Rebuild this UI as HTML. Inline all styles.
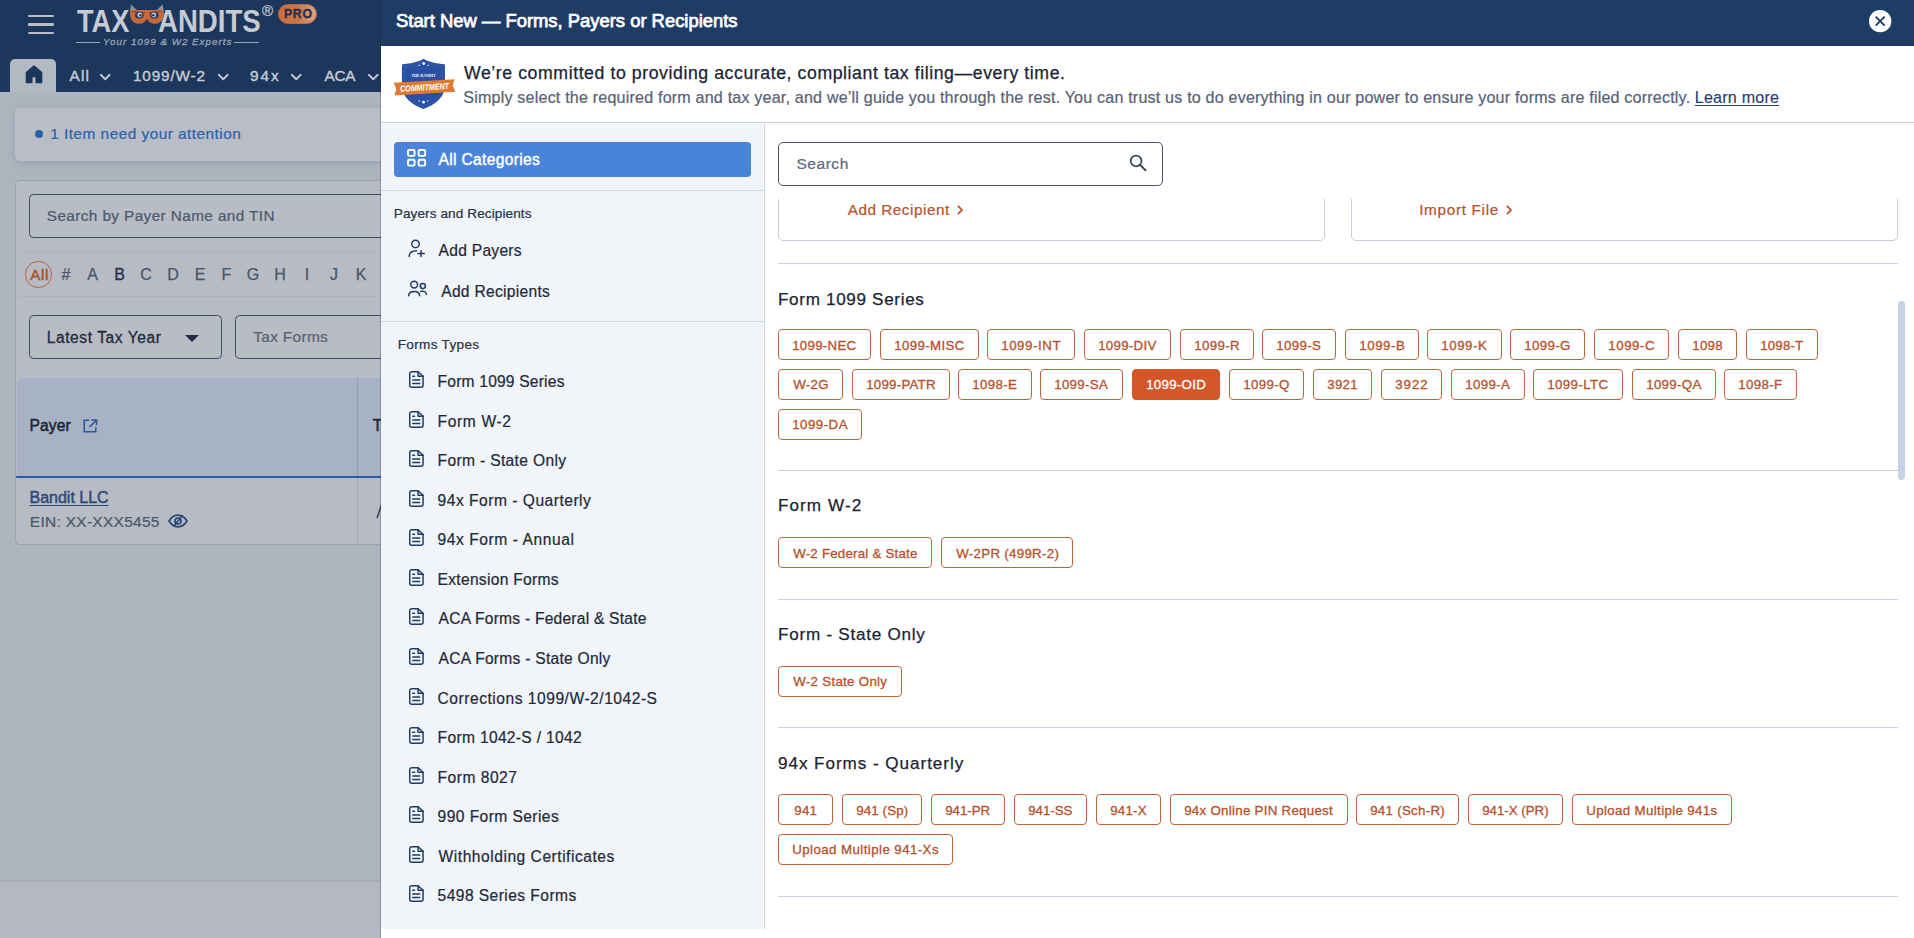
<!DOCTYPE html>
<html lang="en"><head><meta charset="utf-8"><title>TaxBandits - Start New</title>
<style>
*{box-sizing:border-box;margin:0;padding:0}
html,body{width:1914px;height:938px;overflow:hidden;background:#fff;font-family:"Liberation Sans",sans-serif}
.t{position:absolute;white-space:nowrap;font-family:"Liberation Sans",sans-serif}
.b{position:absolute}
svg{position:absolute;overflow:visible}
.chip{position:absolute;height:31px;border:1px solid #c0633c;border-radius:4px;background:#fff}
.chip.on{background:#d4572a;border-color:#d4572a}
.sep{position:absolute;height:1px;background:#c9cfdd}
i.m{display:inline-block;width:0;height:0}

</style></head>
<body>
<div class="b" style="left:0;top:0;width:381px;height:938px;background:#adb4be"></div>
<div class="b" style="left:0;top:0;width:381px;height:92px;background:#1c365c"></div>
<div class="b" style="left:28px;top:14.5px;width:26px;height:2.4px;background:#b9bec8;border-radius:1px"></div>
<div class="b" style="left:28px;top:23.3px;width:26px;height:2.4px;background:#b9bec8;border-radius:1px"></div>
<div class="b" style="left:28px;top:32px;width:26px;height:2.4px;background:#b9bec8;border-radius:1px"></div>
<span class="t" style="left:76.6px;top:5px;font-size:32px;line-height:32px;font-weight:700;color:#c6cad2;letter-spacing:0.000px;transform:scaleX(0.8492);transform-origin:0 0;">TAX</span>
<span class="t" style="left:157.838px;top:5px;font-size:32px;line-height:32px;font-weight:700;color:#c6cad2;letter-spacing:0.000px;transform:scaleX(0.8624);transform-origin:0 0;">ANDITS</span>
<svg style="left:129px;top:3px" width="36" height="22" viewBox="0 0 36 22">
<path d="M1.200 7.500 L2 1.200 L8 7.500 Z M34.800 7.500 L33.600 1.200 L27.500 7.500 Z" fill="#8c94a1"/>
<path d="M1 7 H34.800 L34.600 13 C34 17.500 30.500 20.800 26 20.800 C22 20.800 19.300 18.800 17.900 15.800 C16.500 18.800 13.800 20.800 9.800 20.800 C5.300 20.800 1.800 17.500 1.200 13 Z" fill="#c8693a"/>
<path d="M3 8.300 L16 10 M32.800 8.300 L19.800 10" stroke="#8f4a28" stroke-width="1.300"/>
<ellipse cx="10.300" cy="12.200" rx="4.300" ry="3.400" fill="#2b3b5e"/><ellipse cx="25.300" cy="12.200" rx="4.300" ry="3.400" fill="#2b3b5e"/>
<circle cx="10.800" cy="12" r="2.400" fill="#c9ced8"/><circle cx="24.800" cy="12" r="2.400" fill="#c9ced8"/>
<circle cx="11.300" cy="12.200" r="1.200" fill="#1c365c"/><circle cx="24.300" cy="12.200" r="1.200" fill="#1c365c"/>
</svg>
<span class="t" style="left:262px;top:3px;font-size:15px;line-height:15px;font-weight:400;color:#c6cad2;letter-spacing:0.000px;-webkit-text-stroke:.22px;">®</span>
<div class="b" style="left:278.300px;top:4px;width:38.700px;height:20.300px;border-radius:10.500px;background:linear-gradient(90deg,#cf6f3a 0%,#c97648 50%,#d8a585 100%);border:1px solid #b66b43"></div>
<span class="t" style="left:284px;top:8px;font-size:12.3px;line-height:12px;font-weight:700;color:#272c4f;letter-spacing:0.650px;-webkit-text-stroke:.3px;">PRO</span>
<div class="b" style="left:76px;top:41.500px;width:24px;height:1px;background:#9aa3b3"></div>
<div class="b" style="left:234px;top:41.500px;width:25px;height:1px;background:#9aa3b3"></div>
<span class="t" style="left:103px;top:37px;font-size:9.8px;line-height:10px;font-weight:400;color:#9aa3b3;letter-spacing:1.000px;font-style:italic;-webkit-text-stroke:.3px #9aa3b3;">Your 1099 &amp; W2 Experts</span>
<div class="b" style="left:10px;top:59px;width:46px;height:33px;background:#b3b9c3;border-radius:5px 5px 0 0"></div>
<svg style="left:24.700px;top:64.600px" width="18" height="19" viewBox="0 0 18 19"><path d="M9 1.200 L1.500 7.500 V17.500 H6.700 V11.500 H11.300 V17.500 H16.500 V7.500 Z" fill="#1c365c" stroke="#1b3459" stroke-width="1.6" stroke-linejoin="round"/></svg>
<span class="t" style="left:69.5px;top:68px;font-size:15.3px;line-height:15px;font-weight:500;color:#c8ccd4;letter-spacing:1.250px;-webkit-text-stroke:.4px;">All</span>
<svg style="left:100px;top:74px" width="10.5" height="6" viewBox="0 0 10.5 6"><path d="M0.800 0.800 L5.25 5.2 L9.7 0.800" fill="none" stroke="#c3c7cf" stroke-width="1.9" stroke-linecap="round" stroke-linejoin="round"/></svg>
<span class="t" style="left:133px;top:68px;font-size:15.3px;line-height:15px;font-weight:500;color:#c8ccd4;letter-spacing:0.857px;-webkit-text-stroke:.4px;">1099/W-2</span>
<svg style="left:217.5px;top:74px" width="10.5" height="6" viewBox="0 0 10.5 6"><path d="M0.800 0.800 L5.25 5.2 L9.7 0.800" fill="none" stroke="#c3c7cf" stroke-width="1.9" stroke-linecap="round" stroke-linejoin="round"/></svg>
<span class="t" style="left:250px;top:68px;font-size:15.3px;line-height:15px;font-weight:500;color:#c8ccd4;letter-spacing:2.000px;-webkit-text-stroke:.4px;">94x</span>
<svg style="left:291px;top:74px" width="10.5" height="6" viewBox="0 0 10.5 6"><path d="M0.800 0.800 L5.25 5.2 L9.7 0.800" fill="none" stroke="#c3c7cf" stroke-width="1.9" stroke-linecap="round" stroke-linejoin="round"/></svg>
<span class="t" style="left:324.5px;top:68px;font-size:15.3px;line-height:15px;font-weight:500;color:#c8ccd4;letter-spacing:-0.250px;-webkit-text-stroke:.4px;">ACA</span>
<svg style="left:368px;top:74px" width="10.5" height="6" viewBox="0 0 10.5 6"><path d="M0.800 0.800 L5.25 5.2 L9.7 0.800" fill="none" stroke="#c3c7cf" stroke-width="1.9" stroke-linecap="round" stroke-linejoin="round"/></svg>
<div class="b" style="left:15px;top:108px;width:380px;height:53px;background:#b8bdc6;border-radius:5px;box-shadow:0 2px 6px rgba(120,130,150,.35)"></div>
<div class="b" style="left:35.400px;top:130.300px;width:8px;height:8px;border-radius:50%;background:#2d5fa8"></div>
<span class="t" style="left:50.3px;top:126px;font-size:15.4px;line-height:15px;font-weight:400;color:#2f62ad;letter-spacing:0.468px;-webkit-text-stroke:.22px;">1 Item need your attention</span>
<div class="b" style="left:15px;top:180px;width:400px;height:365px;background:#b6bbc4;border:1px solid #98a3b4;border-radius:5px"></div>
<div class="b" style="left:29px;top:194px;width:400px;height:44px;border:1.200px solid #3a4c65;border-radius:4.500px;background:#b8bcc5"></div>
<span class="t" style="left:46.8px;top:208px;font-size:15.3px;line-height:15px;font-weight:400;color:#4b596d;letter-spacing:0.415px;-webkit-text-stroke:.22px;">Search by Payer Name and TIN</span>
<div class="b" style="left:18px;top:251px;width:380px;height:1px;background:#aeb4bd"></div>
<div class="b" style="left:18px;top:296px;width:380px;height:1px;background:#aeb4bd"></div>
<div class="b" style="left:25px;top:261px;width:26.500px;height:26.500px;border-radius:50%;border:1px solid #b5623d"></div>
<span class="t" style="left:30.3px;top:267px;font-size:15.2px;line-height:15px;font-weight:500;color:#a8502c;letter-spacing:0.550px;-webkit-text-stroke:.45px;">All</span>
<span class="t" style="left:56px;width:20px;text-align:center;top:267px;font-size:16px;line-height:16px;color:#4a5567;-webkit-text-stroke:.25px;">#</span>
<span class="t" style="left:82.5px;width:20px;text-align:center;top:267px;font-size:16px;line-height:16px;color:#4a5567;-webkit-text-stroke:.25px;">A</span>
<span class="t" style="left:109.5px;width:20px;text-align:center;top:267px;font-size:16px;line-height:16px;color:#26344b;-webkit-text-stroke:.25px;-webkit-text-stroke:.32px;">B</span>
<span class="t" style="left:136px;width:20px;text-align:center;top:267px;font-size:16px;line-height:16px;color:#4a5567;-webkit-text-stroke:.25px;">C</span>
<span class="t" style="left:163px;width:20px;text-align:center;top:267px;font-size:16px;line-height:16px;color:#4a5567;-webkit-text-stroke:.25px;">D</span>
<span class="t" style="left:190px;width:20px;text-align:center;top:267px;font-size:16px;line-height:16px;color:#4a5567;-webkit-text-stroke:.25px;">E</span>
<span class="t" style="left:216.5px;width:20px;text-align:center;top:267px;font-size:16px;line-height:16px;color:#4a5567;-webkit-text-stroke:.25px;">F</span>
<span class="t" style="left:243px;width:20px;text-align:center;top:267px;font-size:16px;line-height:16px;color:#4a5567;-webkit-text-stroke:.25px;">G</span>
<span class="t" style="left:270px;width:20px;text-align:center;top:267px;font-size:16px;line-height:16px;color:#4a5567;-webkit-text-stroke:.25px;">H</span>
<span class="t" style="left:297px;width:20px;text-align:center;top:267px;font-size:16px;line-height:16px;color:#4a5567;-webkit-text-stroke:.25px;">I</span>
<span class="t" style="left:324px;width:20px;text-align:center;top:267px;font-size:16px;line-height:16px;color:#4a5567;-webkit-text-stroke:.25px;">J</span>
<span class="t" style="left:351px;width:20px;text-align:center;top:267px;font-size:16px;line-height:16px;color:#4a5567;-webkit-text-stroke:.25px;">K</span>
<div class="b" style="left:29px;top:315px;width:192.500px;height:43.500px;border:1.200px solid #3a4c65;border-radius:4.500px;background:#b8bcc5"></div>
<span class="t" style="left:46.8px;top:330px;font-size:15.6px;line-height:16px;font-weight:500;color:#1f2a3c;letter-spacing:0.550px;-webkit-text-stroke:.3px;">Latest Tax Year</span>
<svg style="left:185px;top:334.500px" width="14" height="7" viewBox="0 0 14 7"><path d="M0 0 H14 L7 7 Z" fill="#1f2a3c"/></svg>
<div class="b" style="left:234.500px;top:315px;width:200px;height:43.500px;border:1.200px solid #3a4c65;border-radius:4.500px;background:#b8bcc5"></div>
<span class="t" style="left:253.3px;top:329px;font-size:15.5px;line-height:16px;font-weight:400;color:#566274;letter-spacing:0.275px;-webkit-text-stroke:.22px;">Tax Forms</span>
<div class="b" style="left:17px;top:378px;width:380px;height:99px;background:#a7b3c4;border-radius:6px 0 0 0"></div>
<div class="b" style="left:16px;top:476px;width:380px;height:2px;background:#2c5ca5"></div>
<div class="b" style="left:357px;top:378px;width:1.400px;height:98px;background:#8f9bae"></div>
<div class="b" style="left:357px;top:478px;width:1.400px;height:66px;background:#a6adba"></div>
<span class="t" style="left:29.5px;top:418px;font-size:15.6px;line-height:16px;font-weight:500;color:#1c2536;letter-spacing:0.125px;-webkit-text-stroke:.5px;">Payer</span>
<svg style="left:82.500px;top:419px" width="14.500" height="14" viewBox="0 0 14.500 14"><path d="M6 1.300 H1.200 V12.800 H12.800 V8.200" fill="none" stroke="#2e5796" stroke-width="1.6"/><path d="M8.500 1 H13.500 V6 M13.300 1.200 L6.500 8" fill="none" stroke="#2e5796" stroke-width="1.6"/></svg>
<span class="t" style="left:372.8px;top:418px;font-size:15.6px;line-height:16px;font-weight:500;color:#1c2536;letter-spacing:0.000px;-webkit-text-stroke:.5px;">T</span>
<span class="t" style="left:29.5px;top:490px;font-size:16px;line-height:16px;font-weight:500;color:#2a487a;letter-spacing:0.000px;text-decoration:underline;text-underline-offset:2px;-webkit-text-stroke:.4px;">Bandit LLC</span>
<span class="t" style="left:29.8px;top:514px;font-size:15.5px;line-height:16px;font-weight:400;color:#4b5869;letter-spacing:0.279px;-webkit-text-stroke:.22px;">EIN: XX-XXX5455</span>
<svg style="left:168px;top:513.500px" width="20" height="14" viewBox="0 0 20 14"><path d="M1 7 C4 2.200 7 1.200 10 1.200 C13 1.200 16 2.200 19 7 C16 11.800 13 12.800 10 12.800 C7 12.800 4 11.800 1 7 Z" fill="none" stroke="#274574" stroke-width="1.7"/><circle cx="10" cy="7" r="3" fill="none" stroke="#274574" stroke-width="1.6"/><path d="M5.500 12.500 L14.500 1.500" stroke="#274574" stroke-width="1.6"/></svg>
<svg style="left:376px;top:505px" width="6" height="13" viewBox="0 0 6 13"><path d="M1 13 L5.500 0" stroke="#3a4556" stroke-width="1.6"/></svg>
<div class="b" style="left:0;top:877px;width:381px;height:5px;background:linear-gradient(180deg,#b0b7c1 0%,#b0b7c1 45%,#a5acb8 55%,#a5acb8 100%)"></div><div class="b" style="left:0;top:882px;width:381px;height:56px;background:#b4b8c2"></div>
<div class="b" style="left:381px;top:0;width:1533px;height:938px;background:#fff"></div>
<div class="b" style="left:380px;top:0;width:1px;height:938px;background:rgba(20,30,50,.25)"></div><div class="b" style="left:381px;top:0;width:1533px;height:46px;background:#1e3c66;border-bottom:1px solid #193359"></div>
<span class="t" style="left:396px;top:12px;font-size:18.4px;line-height:18px;font-weight:400;color:#ffffff;letter-spacing:0.005px;-webkit-text-stroke:.75px;">Start New — Forms, Payers or Recipients</span>
<svg style="left:1868.600px;top:10px" width="22.300" height="22.300" viewBox="0 0 22 22"><circle cx="11" cy="11" r="11" fill="#fff"/><path d="M6.600 6.600 L15.400 15.400 M15.400 6.600 L6.600 15.400" stroke="#1e3c66" stroke-width="1.9" stroke-linecap="butt"/></svg>
<div class="b" style="left:381px;top:122px;width:1533px;height:1px;background:#c9cedb"></div>
<svg style="left:393px;top:58px" width="64" height="52" viewBox="0 0 64 52">
<path d="M30.500 .8 C25 4.200 17 5.800 9.200 6.200 C8.800 8 8.800 26 9.300 30 C10.300 40 19.500 47 30.500 51 C41.500 47 50.700 40 51.700 30 C52.200 26 52.200 8 51.800 6.200 C44 5.800 36 4.200 30.500 .8 Z" fill="#2c52a6"/>
<path d="M30.500 3.800 C25 6.800 18.500 8.300 11.800 8.700 V29 C12.800 38 20.500 44.500 30.500 48 C40.500 44.500 48.200 38 49.200 29 V8.700 C42.500 8.300 36 6.800 30.500 3.800 Z" fill="#2a4fa3" stroke="#3b63b9" stroke-width=".5"/>
<circle cx="30.700" cy="5.600" r="1.400" fill="#fff"/><circle cx="26.300" cy="7.400" r=".7" fill="#fff"/><circle cx="35.100" cy="7.400" r=".7" fill="#fff"/>
<circle cx="30.500" cy="44.200" r="1.400" fill="#fff"/><circle cx="26.300" cy="43" r=".7" fill="#fff"/><circle cx="34.700" cy="43" r=".7" fill="#fff"/>
<text x="30.500" y="19" font-family="Liberation Serif, serif" font-weight="700" font-size="4.600" fill="#fff" text-anchor="middle" textLength="24" lengthAdjust="spacingAndGlyphs">THE BANDIT</text>
<g transform="rotate(-3.400 31.500 29.300)">
<path d="M1 23 L62 23 L59.800 29.300 L62 35.600 L1 35.600 L3.200 29.300 Z" fill="#e07a32"/>
<text x="31.500" y="32.400" font-family="Liberation Sans, sans-serif" font-weight="700" font-style="italic" font-size="8.600" fill="#fff" text-anchor="middle" textLength="49" lengthAdjust="spacingAndGlyphs">COMMITMENT</text>
</g></svg>
<span class="t" style="left:464px;top:64px;font-size:17.7px;line-height:18px;font-weight:500;color:#1a2233;letter-spacing:0.571px;-webkit-text-stroke:.25px #1a2233;">We’re committed to providing accurate, compliant tax filing—every time.</span>
<span class="t" style="left:463.3px;top:89px;font-size:16.1px;line-height:16px;font-weight:400;color:#586274;letter-spacing:0.187px;-webkit-text-stroke:.22px;">Simply select the required form and tax year, and we’ll guide you through the rest. You can trust us to do everything in our power to ensure your forms are filed correctly.</span>
<span class="t" style="left:1694.8px;top:89px;font-size:16.1px;line-height:16px;font-weight:500;color:#24406e;letter-spacing:0.211px;text-decoration:underline;text-underline-offset:2px;-webkit-text-stroke:.15px #24406e;">Learn more</span>
<div class="b" style="left:381px;top:124px;width:382px;height:804.500px;background:#f1f5fa"></div><div class="b" style="left:764px;top:124px;width:1px;height:804.500px;background:#c9cfdc"></div>
<div class="b" style="left:394px;top:142px;width:357px;height:34.500px;background:#4a84d8;border-radius:4px"></div>
<svg style="left:407px;top:148.800px" width="19.200" height="17.600" viewBox="0 0 19.200 17.600"><g fill="none" stroke="#fff" stroke-width="1.900"><rect x="1" y="1" width="6.600" height="5.900" rx="1.300"/><rect x="11.600" y="1" width="6.600" height="5.900" rx="1.300"/><rect x="1" y="10.700" width="6.600" height="5.900" rx="1.300"/><rect x="11.600" y="10.700" width="6.600" height="5.900" rx="1.300"/></g></svg>
<span class="t" style="left:438.6px;top:152px;font-size:15.6px;line-height:16px;font-weight:500;color:#ffffff;letter-spacing:0.315px;-webkit-text-stroke:.4px;">All Categories</span>
<div class="sep" style="left:381px;top:190px;width:383px;background:#d0d7e3"></div>
<span class="t" style="left:393.8px;top:207px;font-size:13.6px;line-height:14px;font-weight:400;color:#273245;letter-spacing:0.085px;-webkit-text-stroke:.22px;">Payers and Recipients</span>
<svg style="left:400px;top:232px" width="40" height="70" viewBox="0 0 40 70"><g fill="none" stroke="#1f3a63" stroke-width="1.500" stroke-linecap="round"><circle cx="15.500" cy="11.900" r="3.750"/><path d="M9.200 24.400 C9.200 21 12 18.900 16.700 18.800"/><path d="M17.900 21.600 H24.300 M21.100 18.700 V24.600"/><circle cx="14.200" cy="52.600" r="3.400"/><circle cx="22.800" cy="54.100" r="2.550"/><path d="M8.700 63.700 C8.700 60.500 11 59.400 14.200 59.400 C17.400 59.400 19.600 60.500 19.600 63.700"/><path d="M20.700 59.400 C23.600 58.700 26.400 59.800 26.400 62.500"/></g></svg>
<span class="t" style="left:438.6px;top:243px;font-size:15.6px;line-height:16px;font-weight:400;color:#1f2937;letter-spacing:0.267px;-webkit-text-stroke:.22px;">Add Payers</span>
<span class="t" style="left:441.2px;top:284px;font-size:15.6px;line-height:16px;font-weight:400;color:#1f2937;letter-spacing:0.292px;-webkit-text-stroke:.22px;">Add Recipients</span>
<div class="sep" style="left:381px;top:321px;width:383px;background:#d0d7e3"></div>
<span class="t" style="left:397.7px;top:338px;font-size:13.6px;line-height:14px;font-weight:400;color:#273245;letter-spacing:0.310px;-webkit-text-stroke:.22px;">Forms Types</span>
<span class="t" style="left:437.6px;top:374px;font-size:15.6px;line-height:16px;font-weight:400;color:#1f2937;letter-spacing:0.193px;-webkit-text-stroke:.22px;">Form 1099 Series</span>
<svg style="left:409.200px;top:371.07px" width="14.800" height="16.900" viewBox="0 0 14.200 16.800" preserveAspectRatio="none"><g fill="none" stroke="#1f3a63" stroke-width="1.400" stroke-linejoin="round" stroke-linecap="round"><path d="M8.700 .7 H2.700 C1.600 .7 .7 1.600 .7 2.700 V14.100 C.7 15.200 1.600 16.100 2.700 16.100 H11.500 C12.600 16.100 13.500 15.200 13.500 14.100 V5.200 Z"/><path d="M8.700 .7 V5.200 H13.500"/><path d="M3.600 5.300 H5.300 M3.600 9 H10.300 M3.600 12.400 H10.300"/></g></svg>
<span class="t" style="left:437.6px;top:414px;font-size:15.6px;line-height:16px;font-weight:400;color:#1f2937;letter-spacing:0.629px;-webkit-text-stroke:.22px;">Form W-2</span>
<svg style="left:409.200px;top:411.07px" width="14.800" height="16.900" viewBox="0 0 14.200 16.800" preserveAspectRatio="none"><g fill="none" stroke="#1f3a63" stroke-width="1.400" stroke-linejoin="round" stroke-linecap="round"><path d="M8.700 .7 H2.700 C1.600 .7 .7 1.600 .7 2.700 V14.100 C.7 15.200 1.600 16.100 2.700 16.100 H11.500 C12.600 16.100 13.500 15.200 13.500 14.100 V5.200 Z"/><path d="M8.700 .7 V5.200 H13.500"/><path d="M3.600 5.300 H5.300 M3.600 9 H10.300 M3.600 12.400 H10.300"/></g></svg>
<span class="t" style="left:437.6px;top:453px;font-size:15.6px;line-height:16px;font-weight:400;color:#1f2937;letter-spacing:0.337px;-webkit-text-stroke:.22px;">Form - State Only</span>
<svg style="left:409.200px;top:450.07px" width="14.800" height="16.900" viewBox="0 0 14.200 16.800" preserveAspectRatio="none"><g fill="none" stroke="#1f3a63" stroke-width="1.400" stroke-linejoin="round" stroke-linecap="round"><path d="M8.700 .7 H2.700 C1.600 .7 .7 1.600 .7 2.700 V14.100 C.7 15.200 1.600 16.100 2.700 16.100 H11.500 C12.600 16.100 13.500 15.200 13.500 14.100 V5.200 Z"/><path d="M8.700 .7 V5.200 H13.500"/><path d="M3.600 5.300 H5.300 M3.600 9 H10.300 M3.600 12.400 H10.300"/></g></svg>
<span class="t" style="left:437.6px;top:493px;font-size:15.6px;line-height:16px;font-weight:400;color:#1f2937;letter-spacing:0.495px;-webkit-text-stroke:.22px;">94x Form - Quarterly</span>
<svg style="left:409.200px;top:490.07px" width="14.800" height="16.900" viewBox="0 0 14.200 16.800" preserveAspectRatio="none"><g fill="none" stroke="#1f3a63" stroke-width="1.400" stroke-linejoin="round" stroke-linecap="round"><path d="M8.700 .7 H2.700 C1.600 .7 .7 1.600 .7 2.700 V14.100 C.7 15.200 1.600 16.100 2.700 16.100 H11.500 C12.600 16.100 13.500 15.200 13.500 14.100 V5.200 Z"/><path d="M8.700 .7 V5.200 H13.500"/><path d="M3.600 5.300 H5.300 M3.600 9 H10.300 M3.600 12.400 H10.300"/></g></svg>
<span class="t" style="left:437.6px;top:532px;font-size:15.6px;line-height:16px;font-weight:400;color:#1f2937;letter-spacing:0.556px;-webkit-text-stroke:.22px;">94x Form - Annual</span>
<svg style="left:409.200px;top:529.07px" width="14.800" height="16.900" viewBox="0 0 14.200 16.800" preserveAspectRatio="none"><g fill="none" stroke="#1f3a63" stroke-width="1.400" stroke-linejoin="round" stroke-linecap="round"><path d="M8.700 .7 H2.700 C1.600 .7 .7 1.600 .7 2.700 V14.100 C.7 15.200 1.600 16.100 2.700 16.100 H11.500 C12.600 16.100 13.500 15.200 13.500 14.100 V5.200 Z"/><path d="M8.700 .7 V5.200 H13.500"/><path d="M3.600 5.300 H5.300 M3.600 9 H10.300 M3.600 12.400 H10.300"/></g></svg>
<span class="t" style="left:437.6px;top:572px;font-size:15.6px;line-height:16px;font-weight:400;color:#1f2937;letter-spacing:0.279px;-webkit-text-stroke:.22px;">Extension Forms</span>
<svg style="left:409.200px;top:569.07px" width="14.800" height="16.900" viewBox="0 0 14.200 16.800" preserveAspectRatio="none"><g fill="none" stroke="#1f3a63" stroke-width="1.400" stroke-linejoin="round" stroke-linecap="round"><path d="M8.700 .7 H2.700 C1.600 .7 .7 1.600 .7 2.700 V14.100 C.7 15.200 1.600 16.100 2.700 16.100 H11.500 C12.600 16.100 13.500 15.200 13.500 14.100 V5.200 Z"/><path d="M8.700 .7 V5.200 H13.500"/><path d="M3.600 5.300 H5.300 M3.600 9 H10.300 M3.600 12.400 H10.300"/></g></svg>
<span class="t" style="left:438.6px;top:611px;font-size:15.6px;line-height:16px;font-weight:400;color:#1f2937;letter-spacing:0.227px;-webkit-text-stroke:.22px;">ACA Forms - Federal &amp; State</span>
<svg style="left:409.200px;top:608.07px" width="14.800" height="16.900" viewBox="0 0 14.200 16.800" preserveAspectRatio="none"><g fill="none" stroke="#1f3a63" stroke-width="1.400" stroke-linejoin="round" stroke-linecap="round"><path d="M8.700 .7 H2.700 C1.600 .7 .7 1.600 .7 2.700 V14.100 C.7 15.200 1.600 16.100 2.700 16.100 H11.500 C12.600 16.100 13.500 15.200 13.500 14.100 V5.200 Z"/><path d="M8.700 .7 V5.200 H13.500"/><path d="M3.600 5.300 H5.300 M3.600 9 H10.300 M3.600 12.400 H10.300"/></g></svg>
<span class="t" style="left:438.6px;top:651px;font-size:15.6px;line-height:16px;font-weight:400;color:#1f2937;letter-spacing:0.257px;-webkit-text-stroke:.22px;">ACA Forms - State Only</span>
<svg style="left:409.200px;top:648.07px" width="14.800" height="16.900" viewBox="0 0 14.200 16.800" preserveAspectRatio="none"><g fill="none" stroke="#1f3a63" stroke-width="1.400" stroke-linejoin="round" stroke-linecap="round"><path d="M8.700 .7 H2.700 C1.600 .7 .7 1.600 .7 2.700 V14.100 C.7 15.200 1.600 16.100 2.700 16.100 H11.500 C12.600 16.100 13.500 15.200 13.500 14.100 V5.200 Z"/><path d="M8.700 .7 V5.200 H13.500"/><path d="M3.600 5.300 H5.300 M3.600 9 H10.300 M3.600 12.400 H10.300"/></g></svg>
<span class="t" style="left:437.6px;top:691px;font-size:15.6px;line-height:16px;font-weight:400;color:#1f2937;letter-spacing:0.515px;-webkit-text-stroke:.22px;">Corrections 1099/W-2/1042-S</span>
<svg style="left:409.200px;top:688.07px" width="14.800" height="16.900" viewBox="0 0 14.200 16.800" preserveAspectRatio="none"><g fill="none" stroke="#1f3a63" stroke-width="1.400" stroke-linejoin="round" stroke-linecap="round"><path d="M8.700 .7 H2.700 C1.600 .7 .7 1.600 .7 2.700 V14.100 C.7 15.200 1.600 16.100 2.700 16.100 H11.500 C12.600 16.100 13.500 15.200 13.500 14.100 V5.200 Z"/><path d="M8.700 .7 V5.200 H13.500"/><path d="M3.600 5.300 H5.300 M3.600 9 H10.300 M3.600 12.400 H10.300"/></g></svg>
<span class="t" style="left:437.6px;top:730px;font-size:15.6px;line-height:16px;font-weight:400;color:#1f2937;letter-spacing:0.318px;-webkit-text-stroke:.22px;">Form 1042-S / 1042</span>
<svg style="left:409.200px;top:727.07px" width="14.800" height="16.900" viewBox="0 0 14.200 16.800" preserveAspectRatio="none"><g fill="none" stroke="#1f3a63" stroke-width="1.400" stroke-linejoin="round" stroke-linecap="round"><path d="M8.700 .7 H2.700 C1.600 .7 .7 1.600 .7 2.700 V14.100 C.7 15.200 1.600 16.100 2.700 16.100 H11.500 C12.600 16.100 13.500 15.200 13.500 14.100 V5.200 Z"/><path d="M8.700 .7 V5.200 H13.500"/><path d="M3.600 5.300 H5.300 M3.600 9 H10.300 M3.600 12.400 H10.300"/></g></svg>
<span class="t" style="left:437.6px;top:770px;font-size:15.6px;line-height:16px;font-weight:400;color:#1f2937;letter-spacing:0.487px;-webkit-text-stroke:.22px;">Form 8027</span>
<svg style="left:409.200px;top:767.07px" width="14.800" height="16.900" viewBox="0 0 14.200 16.800" preserveAspectRatio="none"><g fill="none" stroke="#1f3a63" stroke-width="1.400" stroke-linejoin="round" stroke-linecap="round"><path d="M8.700 .7 H2.700 C1.600 .7 .7 1.600 .7 2.700 V14.100 C.7 15.200 1.600 16.100 2.700 16.100 H11.500 C12.600 16.100 13.500 15.200 13.500 14.100 V5.200 Z"/><path d="M8.700 .7 V5.200 H13.500"/><path d="M3.600 5.300 H5.300 M3.600 9 H10.300 M3.600 12.400 H10.300"/></g></svg>
<span class="t" style="left:437.6px;top:809px;font-size:15.6px;line-height:16px;font-weight:400;color:#1f2937;letter-spacing:0.421px;-webkit-text-stroke:.22px;">990 Form Series</span>
<svg style="left:409.200px;top:806.07px" width="14.800" height="16.900" viewBox="0 0 14.200 16.800" preserveAspectRatio="none"><g fill="none" stroke="#1f3a63" stroke-width="1.400" stroke-linejoin="round" stroke-linecap="round"><path d="M8.700 .7 H2.700 C1.600 .7 .7 1.600 .7 2.700 V14.100 C.7 15.200 1.600 16.100 2.700 16.100 H11.500 C12.600 16.100 13.500 15.200 13.500 14.100 V5.200 Z"/><path d="M8.700 .7 V5.200 H13.500"/><path d="M3.600 5.300 H5.300 M3.600 9 H10.300 M3.600 12.400 H10.300"/></g></svg>
<span class="t" style="left:438.6px;top:849px;font-size:15.6px;line-height:16px;font-weight:400;color:#1f2937;letter-spacing:0.517px;-webkit-text-stroke:.22px;">Withholding Certificates</span>
<svg style="left:409.200px;top:846.07px" width="14.800" height="16.900" viewBox="0 0 14.200 16.800" preserveAspectRatio="none"><g fill="none" stroke="#1f3a63" stroke-width="1.400" stroke-linejoin="round" stroke-linecap="round"><path d="M8.700 .7 H2.700 C1.600 .7 .7 1.600 .7 2.700 V14.100 C.7 15.200 1.600 16.100 2.700 16.100 H11.500 C12.600 16.100 13.500 15.200 13.500 14.100 V5.200 Z"/><path d="M8.700 .7 V5.200 H13.500"/><path d="M3.600 5.300 H5.300 M3.600 9 H10.300 M3.600 12.400 H10.300"/></g></svg>
<span class="t" style="left:437.6px;top:888px;font-size:15.6px;line-height:16px;font-weight:400;color:#1f2937;letter-spacing:0.431px;-webkit-text-stroke:.22px;">5498 Series Forms</span>
<svg style="left:409.200px;top:885.07px" width="14.800" height="16.900" viewBox="0 0 14.200 16.800" preserveAspectRatio="none"><g fill="none" stroke="#1f3a63" stroke-width="1.400" stroke-linejoin="round" stroke-linecap="round"><path d="M8.700 .7 H2.700 C1.600 .7 .7 1.600 .7 2.700 V14.100 C.7 15.200 1.600 16.100 2.700 16.100 H11.500 C12.600 16.100 13.500 15.200 13.500 14.100 V5.200 Z"/><path d="M8.700 .7 V5.200 H13.500"/><path d="M3.600 5.300 H5.300 M3.600 9 H10.300 M3.600 12.400 H10.300"/></g></svg>
<div class="b" style="left:778px;top:142px;width:385px;height:44px;border:1.200px solid #46556a;border-radius:5px;background:#fff"></div>
<span class="t" style="left:796.4px;top:156px;font-size:15.5px;line-height:16px;font-weight:400;color:#5b6880;letter-spacing:0.560px;-webkit-text-stroke:.22px;">Search</span>
<svg style="left:1126px;top:150px" width="24" height="24" viewBox="0 0 24 24"><circle cx="10.100" cy="10.900" r="5.400" fill="none" stroke="#3b485c" stroke-width="1.750"/><path d="M14.100 14.900 L19.500 20.300" stroke="#3b485c" stroke-width="2" stroke-linecap="round"/></svg>
<div class="b" style="left:778px;top:199px;width:547px;height:42px;overflow:hidden"><div style="position:absolute;left:0;top:-30px;width:547px;height:72px;border:1px solid #c8cedc;border-radius:5px"></div></div>
<div class="b" style="left:1351px;top:199px;width:547px;height:42px;overflow:hidden"><div style="position:absolute;left:0;top:-30px;width:547px;height:72px;border:1px solid #c8cedc;border-radius:5px"></div></div>
<span class="t" style="left:847.7px;top:202px;font-size:15.3px;line-height:15px;font-weight:500;color:#b95028;letter-spacing:0.525px;-webkit-text-stroke:.2px #b5512a;">Add Recipient</span>
<svg style="left:956.500px;top:204.500px" width="6" height="10" viewBox="0 0 6 10"><path d="M.9 .9 L5 5 L.9 9.100" fill="none" stroke="#b5512a" stroke-width="1.700"/></svg>
<span class="t" style="left:1419.2px;top:202px;font-size:15.3px;line-height:15px;font-weight:500;color:#b95028;letter-spacing:0.680px;-webkit-text-stroke:.2px #b5512a;">Import File</span>
<svg style="left:1505.500px;top:204.500px" width="6" height="10" viewBox="0 0 6 10"><path d="M.9 .9 L5 5 L.9 9.100" fill="none" stroke="#b5512a" stroke-width="1.700"/></svg>
<div class="sep" style="left:778px;top:263px;width:1120px"></div>
<span class="t" style="left:778px;top:291px;font-size:17.1px;line-height:17px;font-weight:500;color:#1a2233;letter-spacing:0.667px;-webkit-text-stroke:.25px #1a2233;">Form 1099 Series</span>
<div class="chip" style="left:778px;top:329px;width:93px;height:31px"></div>
<span class="t" style="left:792.2px;top:339px;font-size:13.3px;line-height:13px;font-weight:500;color:#b5512a;letter-spacing:0.271px;-webkit-text-stroke:.3px #b5512a;">1099-NEC</span>
<div class="chip" style="left:880px;top:329px;width:99px;height:31px"></div>
<span class="t" style="left:894.2px;top:339px;font-size:13.3px;line-height:13px;font-weight:500;color:#b5512a;letter-spacing:0.362px;-webkit-text-stroke:.3px #b5512a;">1099-MISC</span>
<div class="chip" style="left:987px;top:329px;width:88px;height:31px"></div>
<span class="t" style="left:1001.2px;top:339px;font-size:13.3px;line-height:13px;font-weight:500;color:#b5512a;letter-spacing:0.557px;-webkit-text-stroke:.3px #b5512a;">1099-INT</span>
<div class="chip" style="left:1084px;top:329px;width:87px;height:31px"></div>
<span class="t" style="left:1098.2px;top:339px;font-size:13.3px;line-height:13px;font-weight:500;color:#b5512a;letter-spacing:0.271px;-webkit-text-stroke:.3px #b5512a;">1099-DIV</span>
<div class="chip" style="left:1180px;top:329px;width:74px;height:31px"></div>
<span class="t" style="left:1194.2px;top:339px;font-size:13.3px;line-height:13px;font-weight:500;color:#b5512a;letter-spacing:0.380px;-webkit-text-stroke:.3px #b5512a;">1099-R</span>
<div class="chip" style="left:1262px;top:329px;width:74px;height:31px"></div>
<span class="t" style="left:1276.2px;top:339px;font-size:13.3px;line-height:13px;font-weight:500;color:#b5512a;letter-spacing:0.380px;-webkit-text-stroke:.3px #b5512a;">1099-S</span>
<div class="chip" style="left:1345px;top:329px;width:74px;height:31px"></div>
<span class="t" style="left:1359.2px;top:339px;font-size:13.3px;line-height:13px;font-weight:500;color:#b5512a;letter-spacing:0.580px;-webkit-text-stroke:.3px #b5512a;">1099-B</span>
<div class="chip" style="left:1427px;top:329px;width:75px;height:31px"></div>
<span class="t" style="left:1441.2px;top:339px;font-size:13.3px;line-height:13px;font-weight:500;color:#b5512a;letter-spacing:0.580px;-webkit-text-stroke:.3px #b5512a;">1099-K</span>
<div class="chip" style="left:1510px;top:329px;width:75px;height:31px"></div>
<span class="t" style="left:1524.2px;top:339px;font-size:13.3px;line-height:13px;font-weight:500;color:#b5512a;letter-spacing:0.380px;-webkit-text-stroke:.3px #b5512a;">1099-G</span>
<div class="chip" style="left:1594px;top:329px;width:75px;height:31px"></div>
<span class="t" style="left:1608.2px;top:339px;font-size:13.3px;line-height:13px;font-weight:500;color:#b5512a;letter-spacing:0.580px;-webkit-text-stroke:.3px #b5512a;">1099-C</span>
<div class="chip" style="left:1678px;top:329px;width:59px;height:31px"></div>
<span class="t" style="left:1692.2px;top:339px;font-size:13.3px;line-height:13px;font-weight:500;color:#b5512a;letter-spacing:0.300px;-webkit-text-stroke:.3px #b5512a;">1098</span>
<div class="chip" style="left:1746px;top:329px;width:72px;height:31px"></div>
<span class="t" style="left:1760.2px;top:339px;font-size:13.3px;line-height:13px;font-weight:500;color:#b5512a;letter-spacing:0.180px;-webkit-text-stroke:.3px #b5512a;">1098-T</span>
<div class="chip" style="left:778px;top:369px;width:65px;height:31px"></div>
<span class="t" style="left:793.2px;top:378px;font-size:13.3px;line-height:13px;font-weight:500;color:#b5512a;letter-spacing:0.300px;-webkit-text-stroke:.3px #b5512a;">W-2G</span>
<div class="chip" style="left:852px;top:369px;width:98px;height:31px"></div>
<span class="t" style="left:866.2px;top:378px;font-size:13.3px;line-height:13px;font-weight:500;color:#b5512a;letter-spacing:0.237px;-webkit-text-stroke:.3px #b5512a;">1099-PATR</span>
<div class="chip" style="left:958px;top:369px;width:74px;height:31px"></div>
<span class="t" style="left:972.2px;top:378px;font-size:13.3px;line-height:13px;font-weight:500;color:#b5512a;letter-spacing:0.380px;-webkit-text-stroke:.3px #b5512a;">1098-E</span>
<div class="chip" style="left:1040px;top:369px;width:83px;height:31px"></div>
<span class="t" style="left:1054.2px;top:378px;font-size:13.3px;line-height:13px;font-weight:500;color:#b5512a;letter-spacing:0.317px;-webkit-text-stroke:.3px #b5512a;">1099-SA</span>
<div class="chip on" style="left:1132px;top:369px;width:88px;height:31px"></div>
<span class="t" style="left:1146.2px;top:378px;font-size:13.3px;line-height:13px;font-weight:500;color:#ffffff;letter-spacing:0.271px;-webkit-text-stroke:.3px #ffffff;">1099-OID</span>
<div class="chip" style="left:1229px;top:369px;width:75px;height:31px"></div>
<span class="t" style="left:1243.2px;top:378px;font-size:13.3px;line-height:13px;font-weight:500;color:#b5512a;letter-spacing:0.380px;-webkit-text-stroke:.3px #b5512a;">1099-Q</span>
<div class="chip" style="left:1313px;top:369px;width:59px;height:31px"></div>
<span class="t" style="left:1327.2px;top:378px;font-size:13.3px;line-height:13px;font-weight:500;color:#b5512a;letter-spacing:0.300px;-webkit-text-stroke:.3px #b5512a;">3921</span>
<div class="chip" style="left:1381px;top:369px;width:61px;height:31px"></div>
<span class="t" style="left:1395.2px;top:378px;font-size:13.3px;line-height:13px;font-weight:500;color:#b5512a;letter-spacing:0.967px;-webkit-text-stroke:.3px #b5512a;">3922</span>
<div class="chip" style="left:1451px;top:369px;width:74px;height:31px"></div>
<span class="t" style="left:1465.2px;top:378px;font-size:13.3px;line-height:13px;font-weight:500;color:#b5512a;letter-spacing:0.380px;-webkit-text-stroke:.3px #b5512a;">1099-A</span>
<div class="chip" style="left:1533px;top:369px;width:90px;height:31px"></div>
<span class="t" style="left:1547.2px;top:378px;font-size:13.3px;line-height:13px;font-weight:500;color:#b5512a;letter-spacing:0.414px;-webkit-text-stroke:.3px #b5512a;">1099-LTC</span>
<div class="chip" style="left:1632px;top:369px;width:84px;height:31px"></div>
<span class="t" style="left:1646.2px;top:378px;font-size:13.3px;line-height:13px;font-weight:500;color:#b5512a;letter-spacing:0.317px;-webkit-text-stroke:.3px #b5512a;">1099-QA</span>
<div class="chip" style="left:1724px;top:369px;width:73px;height:31px"></div>
<span class="t" style="left:1738.2px;top:378px;font-size:13.3px;line-height:13px;font-weight:500;color:#b5512a;letter-spacing:0.380px;-webkit-text-stroke:.3px #b5512a;">1098-F</span>
<div class="chip" style="left:778px;top:409px;width:84px;height:31px"></div>
<span class="t" style="left:792.2px;top:418px;font-size:13.3px;line-height:13px;font-weight:500;color:#b5512a;letter-spacing:0.483px;-webkit-text-stroke:.3px #b5512a;">1099-DA</span>
<div class="sep" style="left:778px;top:470px;width:1120px"></div>
<span class="t" style="left:778px;top:497px;font-size:17.1px;line-height:17px;font-weight:500;color:#1a2233;letter-spacing:1.071px;-webkit-text-stroke:.25px #1a2233;">Form W-2</span>
<div class="chip" style="left:778px;top:537px;width:154px;height:31px"></div>
<span class="t" style="left:793.2px;top:547px;font-size:13.3px;line-height:13px;font-weight:500;color:#b5512a;letter-spacing:0.217px;-webkit-text-stroke:.3px #b5512a;">W-2 Federal &amp; State</span>
<div class="chip" style="left:941px;top:537px;width:132px;height:31px"></div>
<span class="t" style="left:956.2px;top:547px;font-size:13.3px;line-height:13px;font-weight:500;color:#b5512a;letter-spacing:0.300px;-webkit-text-stroke:.3px #b5512a;">W-2PR (499R-2)</span>
<div class="sep" style="left:778px;top:599px;width:1120px"></div>
<span class="t" style="left:778px;top:626px;font-size:17.1px;line-height:17px;font-weight:500;color:#1a2233;letter-spacing:0.750px;-webkit-text-stroke:.25px #1a2233;">Form - State Only</span>
<div class="chip" style="left:778px;top:666px;width:124px;height:31px"></div>
<span class="t" style="left:793.2px;top:675px;font-size:13.3px;line-height:13px;font-weight:500;color:#b5512a;letter-spacing:0.300px;-webkit-text-stroke:.3px #b5512a;">W-2 State Only</span>
<div class="sep" style="left:778px;top:727px;width:1120px"></div>
<span class="t" style="left:778px;top:755px;font-size:17.1px;line-height:17px;font-weight:500;color:#1a2233;letter-spacing:0.950px;-webkit-text-stroke:.25px #1a2233;">94x Forms - Quarterly</span>
<div class="chip" style="left:778px;top:794px;width:55px;height:31px"></div>
<span class="t" style="left:794.2px;top:804px;font-size:13.3px;line-height:13px;font-weight:500;color:#b5512a;letter-spacing:0.300px;-webkit-text-stroke:.3px #b5512a;">941</span>
<div class="chip" style="left:842px;top:794px;width:80px;height:31px"></div>
<span class="t" style="left:856.2px;top:804px;font-size:13.3px;line-height:13px;font-weight:500;color:#b5512a;letter-spacing:0.129px;-webkit-text-stroke:.3px #b5512a;">941 (Sp)</span>
<div class="chip" style="left:931px;top:794px;width:74px;height:31px"></div>
<span class="t" style="left:945.2px;top:804px;font-size:13.3px;line-height:13px;font-weight:500;color:#b5512a;letter-spacing:-0.020px;-webkit-text-stroke:.3px #b5512a;">941-PR</span>
<div class="chip" style="left:1014px;top:794px;width:73px;height:31px"></div>
<span class="t" style="left:1028.2px;top:804px;font-size:13.3px;line-height:13px;font-weight:500;color:#b5512a;letter-spacing:-0.020px;-webkit-text-stroke:.3px #b5512a;">941-SS</span>
<div class="chip" style="left:1096px;top:794px;width:65px;height:31px"></div>
<span class="t" style="left:1110.2px;top:804px;font-size:13.3px;line-height:13px;font-weight:500;color:#b5512a;letter-spacing:0.225px;-webkit-text-stroke:.3px #b5512a;">941-X</span>
<div class="chip" style="left:1170px;top:794px;width:178px;height:31px"></div>
<span class="t" style="left:1184.2px;top:804px;font-size:13.3px;line-height:13px;font-weight:500;color:#b5512a;letter-spacing:0.281px;-webkit-text-stroke:.3px #b5512a;">94x Online PIN Request</span>
<div class="chip" style="left:1356px;top:794px;width:103px;height:31px"></div>
<span class="t" style="left:1370.2px;top:804px;font-size:13.3px;line-height:13px;font-weight:500;color:#b5512a;letter-spacing:0.290px;-webkit-text-stroke:.3px #b5512a;">941 (Sch-R)</span>
<div class="chip" style="left:1468px;top:794px;width:95px;height:31px"></div>
<span class="t" style="left:1482.2px;top:804px;font-size:13.3px;line-height:13px;font-weight:500;color:#b5512a;letter-spacing:-0.011px;-webkit-text-stroke:.3px #b5512a;">941-X (PR)</span>
<div class="chip" style="left:1572px;top:794px;width:160px;height:31px"></div>
<span class="t" style="left:1586.2px;top:804px;font-size:13.3px;line-height:13px;font-weight:500;color:#b5512a;letter-spacing:0.363px;-webkit-text-stroke:.3px #b5512a;">Upload Multiple 941s</span>
<div class="chip" style="left:778px;top:834px;width:175px;height:31px"></div>
<span class="t" style="left:792.2px;top:843px;font-size:13.3px;line-height:13px;font-weight:500;color:#b5512a;letter-spacing:0.424px;-webkit-text-stroke:.3px #b5512a;">Upload Multiple 941-Xs</span>
<div class="sep" style="left:778px;top:896px;width:1120px"></div>
<div class="b" style="left:1898px;top:300.500px;width:6.500px;height:179.500px;border-radius:4px;background:#c8d2e7"></div>
</body></html>
